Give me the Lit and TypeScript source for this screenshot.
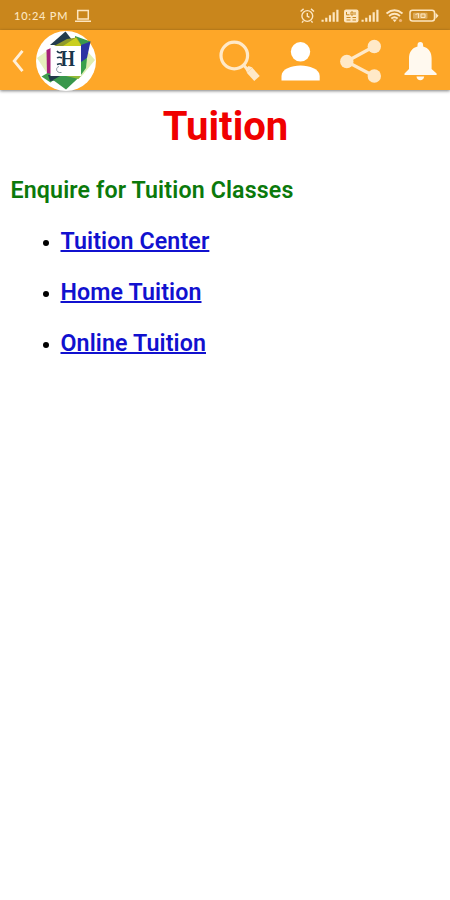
import { LitElement, html, css, svg } from "lit";
import { customElement } from "lit/decorators.js";

const signal = svg`<path d="M0 11h2.200v2H0zM3.700 9h2.200v4h-2.200zM7.400 6.500h2.200V13h-2.200zM11.100 3.500h2.200V13h-2.200zM14.800 1h2.200v12h-2.200z" fill="#fde6c0"/>`;

@customElement("status-bar")
class StatusBar extends LitElement {
  static styles = css`
    :host { display: flex; box-sizing: border-box; height: 30px; background: #c9861c; align-items: center; padding: 2px 11px 0 14px; }
    .time { font: 500 11px/16px Lato, sans-serif; color: #fde6c0; letter-spacing: 0.8px; white-space: nowrap; width: 61px; }
    .spacer { flex: 1; }
    svg { display: block; flex: none; }
  `;
  render() {
    return html`
      <span class="time">10:24 PM</span>
      <svg width="16" height="14" viewBox="0 0 16 14"><path d="M2.7 1.5h10.6v8.500H2.700zM0 12.300h16" fill="none" stroke="#fde6c0" stroke-width="1.500"/></svg>
      <span class="spacer"></span>
      <svg width="140" height="16" viewBox="299 8 140 16">
        <g fill="none" stroke="#fde6c0" stroke-width="1.400">
          <circle cx="307.300" cy="16" r="5.400"/><path d="M307.300 13v3.200l2.200 1.100M300.600 11.500l3-2.600M314 11.500l-3-2.600M303.300 21l-1.300 1.600M311.300 21l1.300 1.600"/>
        </g>
        <g transform="translate(321.5 8.7)">${signal}</g>
        <rect x="344" y="9.500" width="14.500" height="13" rx="2" fill="#fde6c0"/>
        <path d="M346.500 12v2.800h3M351 12h2v3h-2zM355 12v3M346.500 17.500h4M352.500 17.500h3.500M346.500 20h4M352.500 20h3.500" fill="none" stroke="#c9861c" stroke-width="1"/>
        <g transform="translate(361.5 8.7)">${signal}</g>
        <path d="M386.500 13.500q8-6.500 16 0M389 16q5.500-4.500 11 0M391.300 18.500q3.200-2.600 6.400 0" fill="none" stroke="#fde6c0" stroke-width="1.800"/>
        <path d="M392.500 19.500h4.400l-2.200 2.800z" fill="#fde6c0"/>
        <circle cx="400.500" cy="20.500" r="1.600" fill="#f0b77c"/>
        <rect x="410" y="10.300" width="24.500" height="10.800" rx="2.500" fill="none" stroke="#fde6c0" stroke-width="1.500"/>
        <path d="M435.500 12.500l3 3.200-3 3.200z" fill="#fde6c0"/>
        <rect x="413" y="12.700" width="14.500" height="6" rx="1" fill="#fde6c0" opacity=".4"/>
        <path d="M415.500 14.500l3-1v4.500M421 14h4v3.500h-4z" fill="none" stroke="#fde6c0" stroke-width="1"/>
      </svg>
    `;
  }
}

@customElement("app-toolbar")
class AppToolbar extends LitElement {
  static styles = css`
    :host { display: flex; box-sizing: border-box; height: 60px; background: #fea728; align-items: center; padding: 2px 12px 0 11px; box-shadow: 0 1px 3px rgba(0, 0, 0, 0.5); position: relative; }
    svg { display: block; flex: none; }
    .logo { margin-left: 10px; }
    .mark { font: 700 23px "Liberation Serif", serif; }
    .actions { margin-left: auto; display: flex; align-items: center; gap: 19px; }
    .bell { margin-left: 3px; }
  `;
  render() {
    return html`
      <svg width="15" height="26" viewBox="0 0 15 26"><path d="M11.500 2.800L3.200 13l8.300 10.200" fill="none" stroke="#fff0d9" stroke-width="2.800"/></svg>
      <svg class="logo" width="60" height="60" viewBox="36 31 60 60">
        <circle cx="66" cy="61" r="30" fill="#fff"/>
        <path d="M51 48L37 58l13 20z" fill="#e6f1bd"/>
        <path d="M88 52l7 8-14 17z" fill="#dfeeb0"/>
        <path d="M65.500 31.500L50 45h26z" fill="#233c4d"/>
        <path d="M75 36l15.500 5.500L84 56l-9-10z" fill="#3a9a4b"/>
        <path d="M54 46l13-7 10-1.500 5 8.500z" fill="#8f9a2c"/>
        <path d="M63 46l13-8.500 5.500 8.500z" fill="#c9cf1f"/>
        <path d="M81 45l9.500-3.500L87 58l-6 8z" fill="#2b35a3"/>
        <path d="M81 62l6-4-1 10-5 7z" fill="#3aa04c"/>
        <path d="M46.500 50l4.500-2v28l-4-1z" fill="#a52179"/>
        <path d="M47.500 73l-6 3.500 9 6 8-6.500z" fill="#3f9c4c"/>
        <path d="M48 75h14l-4 5-8 1z" fill="#213b4a"/>
        <path d="M53 80l8-4.500h20L66 89.500z" fill="#39974c"/>
        <path d="M64 75.500h17.500l-3 3.500z" fill="#94ba38"/>
        <rect x="50.500" y="46" width="30.500" height="30" fill="#fff"/>
        <text class="mark" x="60.500" y="66" textLength="14.500" lengthAdjust="spacingAndGlyphs" fill="#18364b">H</text>
        <path d="M57 51q1.500 2.500 5 1.200M57 58q2-1.500 5 0M57 64.500q3.500-1.500 5 0" fill="none" stroke="#18364b" stroke-width="1.500"/>
        <path d="M59 66.500c-4 1-3 7 2.500 6" fill="none" stroke="#7d8e9a" stroke-width=".9"/>
      </svg>
      <div class="actions">
        <svg width="43" height="44" viewBox="219 38 43 44">
          <circle cx="234.300" cy="54.500" r="13.300" fill="none" stroke="#ffe9c8" stroke-width="3.200"/>
          <path d="M243.500 64l4 4.500" stroke="#ffe9c8" stroke-width="3"/>
          <path d="M249.500 69.300L257 77.500" stroke="#ffe9c8" stroke-width="7.500"/>
          <path d="M245.500 68.500l3-3.500 4 1.500-5.500 5z" fill="#ffe9c8"/>
        </svg>
        <svg width="39" height="40" viewBox="281 40 39 40">
          <circle cx="300.500" cy="50.800" r="9.700" fill="#fff"/>
          <path d="M281.500 79.500V75c0-7 10-10.500 19-10.500S319.700 68 319.700 75v4.500z" fill="#fff"/>
        </svg>
        <svg width="43" height="44" viewBox="339 38 43 44">
          <path d="M374 45.500L346.500 60.500 374 75" fill="none" stroke="#ffe9c8" stroke-width="3.200"/>
          <g fill="#ffe9c8"><circle cx="374.300" cy="45.500" r="6.700"/><circle cx="346.800" cy="60.500" r="6.700"/><circle cx="374.300" cy="75" r="6.700"/></g>
        </svg>
        <svg class="bell" width="34" height="40" viewBox="404 40.500 34 40">
          <path d="M404.500 74.500v-1.500l4.500-4.500V58c0-6.500 3-10.500 8.500-12v-1.500q0-3 2.800-3t2.800 3V46c5.500 1.500 8.500 5.500 8.500 12v10.500l5 4.500v1.500z" fill="#fff9ef"/>
          <path d="M416.500 76h7.700q-.7 3.800-3.900 3.800T416.500 76z" fill="#fff9ef"/>
        </svg>
      </div>
    `;
  }
}

@customElement("app-root")
class AppRoot extends LitElement {
  static styles = css`
    :host { display: block; min-height: 900px; background: #fff; font-family: Roboto, sans-serif; overflow: hidden; }
    h1 { margin: 13px 0 0; padding-left: 1px; text-align: center; font-size: 40px; line-height: 48px; font-weight: 700; color: #f00000; }
    h2 { margin: 25px 0 0 10.500px; font-size: 23.200px; line-height: 28px; font-weight: 600; letter-spacing: 0.140px; color: #0b790b; white-space: nowrap; }
    ul { list-style: none; margin: 23px 0 0; padding: 0 0 0 43px; display: grid; gap: 23px; }
    li { display: flex; align-items: center; height: 28px; font-size: 23.200px; line-height: 28px; font-weight: 600; letter-spacing: 0.120px; }
    li::before { content: ""; width: 6px; height: 6px; border-radius: 50%; background: #000; margin: 3px 11.500px 0 0; flex: none; }
    a { color: #1111cf; text-decoration: underline; text-decoration-thickness: 2px; text-underline-offset: 1px; text-decoration-skip-ink: none; white-space: nowrap; }
  `;
  render() {
    return html`
      <status-bar></status-bar>
      <app-toolbar></app-toolbar>
      <h1>Tuition</h1>
      <h2>Enquire for Tuition Classes</h2>
      <ul>
        ${["Tuition Center", "Home Tuition", "Online Tuition"].map((t) => html`<li><a href="#">${t}</a></li>`)}
      </ul>
    `;
  }
}
